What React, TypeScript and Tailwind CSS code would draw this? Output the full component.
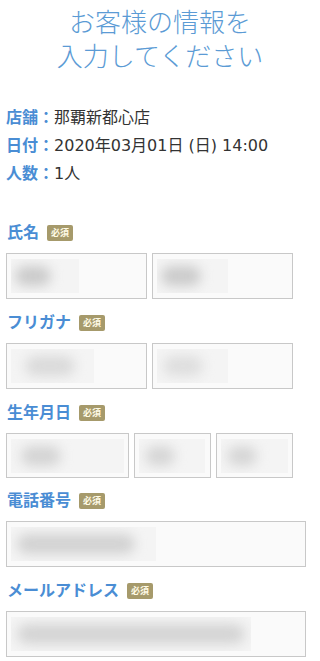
import React from "react";

const font = { fontFamily: '"DejaVu Sans", "Noto Sans CJK JP", sans-serif' };

function Badge() {
  return (
    <span className="ml-2 inline-flex h-4 w-[26px] items-center justify-center rounded-[2px] bg-[#a69a6b] text-[9px] font-bold leading-none text-[#fffbe6]">
      必須
    </span>
  );
}

function Label({ children }: { children: React.ReactNode }) {
  return (
    <div className="flex h-6 items-center pl-[1px] text-[16px] font-bold text-[#4a8dd4]">
      <span>{children}</span>
      <Badge />
    </div>
  );
}

function Field({ w, h = "h-[46px]", inner, blob }: { w: string; h?: string; inner: string; blob: string }) {
  return (
    <div className={`${w} ${h} flex items-center border border-[#c8c8c8] bg-[#fafafa] px-[4px]`}>
      <div className={`${inner} relative h-[34px] overflow-hidden bg-[#f4f4f4]`}>
        <div className={`absolute top-[7px] h-[20px] rounded-full blur-[6px] ${blob}`} />
      </div>
    </div>
  );
}

export default function App() {
  return (
    <div className="w-[320px] bg-white pb-2 text-[#333]" style={font}>
      <h1 className="pt-[6px] text-center text-[26px] font-light leading-[34px] text-[#5b9bd5]">
        お客様の情報を
        <br />
        入力してください
      </h1>

      <div className="mt-[30px] pl-[6px] text-[16px] leading-[28px]">
        <div>
          <span className="font-bold text-[#4a8dd4]">店舗：</span>那覇新都心店
        </div>
        <div>
          <span className="font-bold text-[#4a8dd4]">日付：</span>2020年03月01日 (日) 14:00
        </div>
        <div>
          <span className="font-bold text-[#4a8dd4]">人数：</span>1人
        </div>
      </div>

      <div className="mt-[33px] pl-[6px]">
        <Label>氏名</Label>
        <div className="mt-2 flex gap-[5px]">
          <Field w="w-[141px]" inner="w-[68px]" blob="left-[4px] w-[36px] bg-[#cbcbcb]" />
          <Field w="w-[141px]" inner="w-[71px]" blob="left-[4px] w-[40px] bg-[#cbcbcb]" />
        </div>

        <div className="mt-[12px]">
          <Label>フリガナ</Label>
        </div>
        <div className="mt-2 flex gap-[5px]">
          <Field w="w-[141px]" inner="w-[83px]" blob="left-[14px] w-[50px] bg-[#dadada]" />
          <Field w="w-[141px]" inner="w-[71px]" blob="left-[6px] w-[40px] bg-[#dedede]" />
        </div>

        <div className="mt-[12px]">
          <Label>生年月日</Label>
        </div>
        <div className="mt-2 flex gap-[5px]">
          <Field w="w-[123px]" h="h-[45px]" inner="w-[113px]" blob="left-[10px] w-[40px] bg-[#d4d4d4]" />
          <Field w="w-[77px]" h="h-[45px]" inner="w-[66px]" blob="left-[6px] w-[30px] bg-[#d6d6d6]" />
          <Field w="w-[77px]" h="h-[45px]" inner="w-[68px]" blob="left-[6px] w-[30px] bg-[#d6d6d6]" />
        </div>

        <div className="mt-[11px]">
          <Label>電話番号</Label>
        </div>
        <div className="mt-2">
          <Field w="w-[300px]" inner="w-[145px]" blob="left-[6px] w-[118px] bg-[#d2d2d2]" />
        </div>

        <div className="mt-[12px]">
          <Label>メールアドレス</Label>
        </div>
        <div className="mt-2">
          <Field w="w-[300px]" inner="w-[240px]" blob="left-[6px] w-[228px] bg-[#d4d4d4]" />
        </div>
      </div>
    </div>
  );
}
